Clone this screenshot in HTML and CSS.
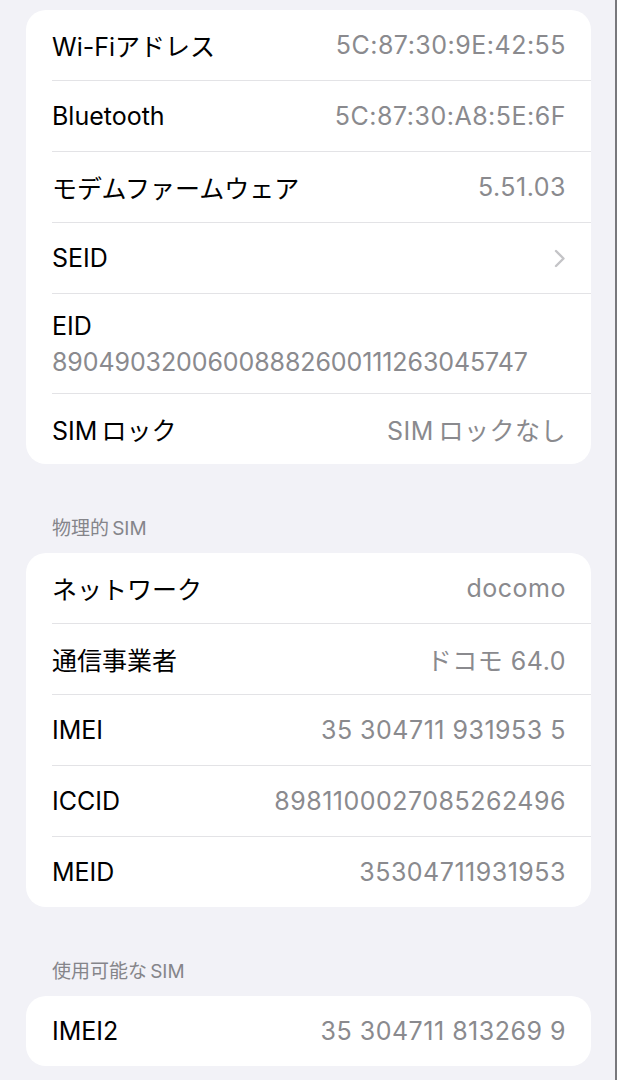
FILE: index.html
```html
<!DOCTYPE html>
<html lang="ja">
<head>
  <meta charset="UTF-8" />
  <title>情報</title>
  <meta name="viewport" content="width=device-width, initial-scale=1" />
  <link rel="stylesheet" href="styles.css">
</head>
<body>
  <div class="screen">
    <div class="card">
      <div class="row">
        <span class="label">Wi-Fiアドレス</span>
        <span class="value">5C:87:30:9E:42:55</span>
      </div>
      <div class="row">
        <span class="label">Bluetooth</span>
        <span class="value">5C:87:30:A8:5E:6F</span>
      </div>
      <div class="row">
        <span class="label">モデムファームウェア</span>
        <span class="value">5.51.03</span>
      </div>
      <div class="row">
        <span class="label">SEID</span>
        <svg class="chevron" width="12" height="19" viewBox="0 0 12 19">
          <path d="M2 2 L9.5 9.5 L2 17" fill="none" stroke="#c4c4c7" stroke-width="2.4" stroke-linecap="round" stroke-linejoin="round" />
        </svg>
      </div>
      <div class="row stacked">
        <span class="label">EID</span>
        <span class="value">89049032006008882600111263045747</span>
      </div>
      <div class="row">
        <span class="label">SIM&#8198;ロック</span>
        <span class="value">SIM&#8198;ロックなし</span>
      </div>
    </div>

    <div class="section-title">物理的&#8198;SIM</div>
    <div class="card">
      <div class="row">
        <span class="label">ネットワーク</span>
        <span class="value">docomo</span>
      </div>
      <div class="row">
        <span class="label">通信事業者</span>
        <span class="value">ドコモ 64.0</span>
      </div>
      <div class="row">
        <span class="label">IMEI</span>
        <span class="value">35 304711 931953 5</span>
      </div>
      <div class="row">
        <span class="label">ICCID</span>
        <span class="value">8981100027085262496</span>
      </div>
      <div class="row">
        <span class="label">MEID</span>
        <span class="value">35304711931953</span>
      </div>
    </div>

    <div class="section-title">使用可能な&#8198;SIM</div>
    <div class="card">
      <div class="row">
        <span class="label">IMEI2</span>
        <span class="value">35 304711 813269 9</span>
      </div>
    </div>
  </div>
</body>
</html>
```

FILE: styles.css
```css
body {
  margin: 0;
  background: #f2f2f7;
  font-family: Inter, "Noto Sans CJK JP", sans-serif;
  color: #000;
}
.screen {
  min-height: 100vh;
  padding: 10px 24px 0 26px;
  border-right: 2px solid #78787c;
  box-sizing: border-box;
}
.card {
  background: #fff;
  border-radius: 20px;
  overflow: hidden;
}
.row {
  display: flex;
  justify-content: space-between;
  align-items: center;
  height: 70px;
  margin-left: 26px;
  padding-right: 25px;
  border-bottom: 1px solid #e3e3e6;
  font-size: 25px;
}
.row:last-child {
  border-bottom: none;
}
.row.stacked {
  flex-direction: column;
  align-items: flex-start;
  justify-content: center;
  height: 99px;
  gap: 6px;
}
.label {
  white-space: nowrap;
}
.value {
  color: #8a8a8e;
  white-space: nowrap;
  letter-spacing: 0.5px;
}
.stacked .value {
  letter-spacing: -0.1px;
}
.chevron {
  display: block;
}
.section-title {
  margin: 53px 0 12px 26px;
  line-height: 24px;
  font-size: 19px;
  color: #85858a;
}
```
